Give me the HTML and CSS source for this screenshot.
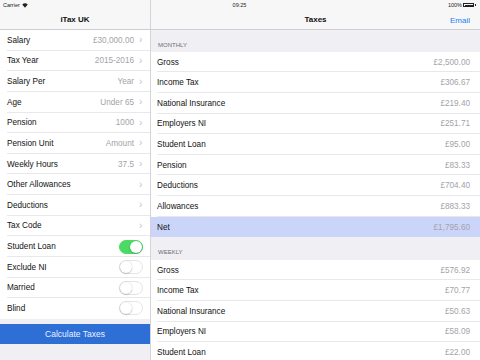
FILE: index.html
```html
<!DOCTYPE html>
<html>
<head>
<meta charset="utf-8">
<link rel="stylesheet" href="styles.css">
</head>
<body>
<div class="status">
  <div class="st-left">Carrier
    <svg class="wifi" width="6" height="5" viewBox="0 0 12 10"><path d="M6 9.5 L0.5 3.2 A8 8 0 0 1 11.5 3.2 Z" fill="#222"/></svg>
  </div>
  <div class="st-mid">09:25</div>
  <div class="st-right">100% <span class="battery"><span class="batt-fill"></span></span><span class="batt-tip"></span></div>
</div>
<div class="master">
  <div class="nav"><span class="nav-title">iTax UK</span></div>
  <div class="list">
    <div class="row"><span class="label">Salary</span><span class="value">£30,000.00</span><span class="chev">›</span></div>
    <div class="row"><span class="label">Tax Year</span><span class="value">2015-2016</span><span class="chev">›</span></div>
    <div class="row"><span class="label">Salary Per</span><span class="value">Year</span><span class="chev">›</span></div>
    <div class="row"><span class="label">Age</span><span class="value">Under 65</span><span class="chev">›</span></div>
    <div class="row"><span class="label">Pension</span><span class="value">1000</span><span class="chev">›</span></div>
    <div class="row"><span class="label">Pension Unit</span><span class="value">Amount</span><span class="chev">›</span></div>
    <div class="row"><span class="label">Weekly Hours</span><span class="value">37.5</span><span class="chev">›</span></div>
    <div class="row"><span class="label">Other Allowances</span><span class="value"></span><span class="chev">›</span></div>
    <div class="row"><span class="label">Deductions</span><span class="value"></span><span class="chev">›</span></div>
    <div class="row"><span class="label">Tax Code</span><span class="value"></span><span class="chev">›</span></div>
    <div class="row"><span class="label">Student Loan</span><span class="toggle on"><span class="knob"></span></span></div>
    <div class="row"><span class="label">Exclude NI</span><span class="toggle"><span class="knob"></span></span></div>
    <div class="row"><span class="label">Married</span><span class="toggle"><span class="knob"></span></span></div>
    <div class="row last"><span class="label">Blind</span><span class="toggle"><span class="knob"></span></span></div>
  </div>
  <div class="button">Calculate Taxes</div>
</div>
<div class="divider"></div>
<div class="detail">
  <div class="nav nav-detail"><span class="nav-title">Taxes</span><span class="nav-action">Email</span></div>
  <div class="section-head first">MONTHLY</div>
  <div class="dlist">
    <div class="drow"><span class="label">Gross</span><span class="dvalue">£2,500.00</span></div>
    <div class="drow"><span class="label">Income Tax</span><span class="dvalue">£306.67</span></div>
    <div class="drow"><span class="label">National Insurance</span><span class="dvalue">£219.40</span></div>
    <div class="drow"><span class="label">Employers NI</span><span class="dvalue">£251.71</span></div>
    <div class="drow"><span class="label">Student Loan</span><span class="dvalue">£95.00</span></div>
    <div class="drow"><span class="label">Pension</span><span class="dvalue">£83.33</span></div>
    <div class="drow"><span class="label">Deductions</span><span class="dvalue">£704.40</span></div>
    <div class="drow"><span class="label">Allowances</span><span class="dvalue">£883.33</span></div>
    <div class="drow net"><span class="label">Net</span><span class="dvalue">£1,795.60</span></div>
  </div>
  <div class="section-head second">WEEKLY</div>
  <div class="dlist">
    <div class="drow"><span class="label">Gross</span><span class="dvalue">£576.92</span></div>
    <div class="drow"><span class="label">Income Tax</span><span class="dvalue">£70.77</span></div>
    <div class="drow"><span class="label">National Insurance</span><span class="dvalue">£50.63</span></div>
    <div class="drow"><span class="label">Employers NI</span><span class="dvalue">£58.09</span></div>
    <div class="drow"><span class="label">Student Loan</span><span class="dvalue">£22.00</span></div>
  </div>
</div>
</body>
</html>
```
FILE: styles.css
```css
* { box-sizing: border-box; }
html, body { margin: 0; padding: 0; }
body {
  width: 480px;
  height: 360px;
  overflow: hidden;
  display: flex;
  font-family: "Liberation Sans", Arial, sans-serif;
  background: #efeff4;
  color: #111;
  position: relative;
}
.status {
  position: absolute;
  left: 0; top: 0;
  width: 480px;
  height: 10px;
  display: flex;
  align-items: center;
  justify-content: space-between;
  font-size: 5.5px;
  color: #222;
  padding: 0 4px 0 3px;
  z-index: 2;
}
.st-left { width: 60px; display: flex; align-items: center; gap: 2px; }
.st-mid { flex: 1; text-align: center; }
.st-right { width: 60px; display: flex; align-items: center; justify-content: flex-end; gap: 1px; }
.battery { width: 11px; height: 4px; border: 0.5px solid #222; display: inline-flex; padding: 0.5px; }
.batt-fill { flex: 1; background: #222; }
.batt-tip { width: 1px; height: 2px; background: #222; }
.master {
  width: 150px;
  flex: none;
  display: flex;
  flex-direction: column;
  background: #efeff4;
}
.nav {
  height: 30px;
  flex: none;
  background: #f7f7f8;
  border-bottom: 1px solid #cfcfd3;
  display: flex;
  align-items: center;
  justify-content: center;
  padding-top: 10px;
  position: relative;
}
.nav-title { font-size: 8px; font-weight: bold; color: #111; }
.nav-action {
  position: absolute;
  right: 10px;
  top: 16px;
  font-size: 8px;
  color: #1a7cf5;
}
.list { background: #fff; }
.row {
  height: 20.625px;
  display: flex;
  align-items: center;
  padding-left: 7px;
  padding-right: 6px;
  position: relative;
}
.row::after {
  content: "";
  position: absolute;
  left: 7px; right: 0; bottom: 0;
  height: 1px;
  background: #e8e8ec;
}
.row.last::after { display: none; }
.label { font-size: 8.2px; color: #111; flex: 1; white-space: nowrap; }
.value { font-size: 8.2px; color: #a3a3a8; }
.chev { font-size: 10px; color: #c4c4c9; margin-left: 5px; width: 5px; line-height: 8px; }
.toggle {
  width: 24px;
  height: 14px;
  border-radius: 7px;
  background: #fff;
  border: 1px solid #e4e4e6;
  position: relative;
  margin-right: 1px;
}
.toggle .knob {
  position: absolute;
  left: 0; top: 0;
  width: 12px; height: 12px;
  border-radius: 50%;
  background: #fff;
  box-shadow: 0 0.5px 1.5px rgba(0,0,0,0.35);
}
.toggle.on { background: #4cd964; border-color: #4cd964; }
.toggle.on .knob { left: 10px; }
.button {
  margin-top: 5px;
  height: 20.625px;
  background: #2e6fd6;
  color: #e8f0ff;
  font-size: 8.5px;
  display: flex;
  align-items: center;
  justify-content: center;
}
.divider { width: 1px; flex: none; background: #d4d4d8; }
.detail {
  flex: 1;
  display: flex;
  flex-direction: column;
  background: #efeff4;
  min-width: 0;
}
.section-head {
  font-size: 6px;
  color: #6d6d72;
  padding-left: 7px;
  display: flex;
  align-items: flex-end;
  padding-bottom: 4px;
  flex: none;
}
.section-head.first { height: 21.7px; }
.section-head.second { height: 22.4px; padding-bottom: 4.5px; }
.dlist { background: #fff; flex: none; }
.drow {
  height: 20.625px;
  display: flex;
  align-items: center;
  padding-left: 6px;
  padding-right: 10px;
  position: relative;
}
.drow::after {
  content: "";
  position: absolute;
  left: 6px; right: 0; bottom: 0;
  height: 1px;
  background: #e8e8ec;
}
.drow.net { background: #cbd5fa; }
.drow.net::after { display: none; }
.dvalue { font-size: 8.2px; color: #a3a3a8; }
```
